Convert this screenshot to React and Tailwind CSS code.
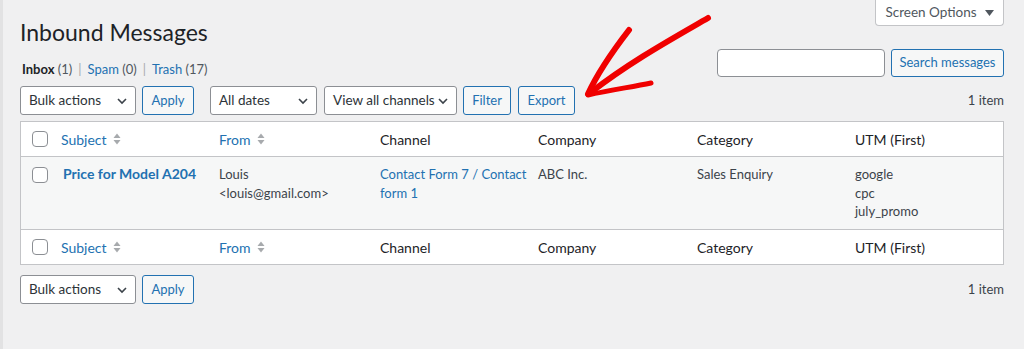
import React from "react";

const font = { fontFamily: 'Lato, "Noto Sans", sans-serif' };

function Chevron() {
	return (
		<svg width="12" height="12" viewBox="0 0 12 12" className="shrink-0 text-[#3c434a]">
			<path d="M2 4 L6 8 L10 4" fill="none" stroke="currentColor" strokeWidth="1.6" />
		</svg>
	);
}

function SelectBox({ label, width }) {
	return (
		<div
			className={`flex items-center justify-between h-[29px] rounded-[3px] border border-[#8c8f94] bg-white pl-[8px] pr-[7px] text-[13.5px] text-[#2c3338] ${width}`}
		>
			<span className="whitespace-nowrap">{label}</span>
			<Chevron />
		</div>
	);
}

function Btn({ children, className = "" }) {
	return (
		<button
			className={`h-[29px] whitespace-nowrap rounded-[3px] border border-[#2271b1] bg-[#f6f7f7] text-[13px] text-[#2271b1] ${className}`}
		>
			{children}
		</button>
	);
}

function Check() {
	return <span className="block h-[16px] w-[16px] rounded-[4px] border border-[#8c8f94] bg-white" />;
}

function SortIcon() {
	return (
		<svg width="10" height="14" viewBox="0 0 10 14" className="ml-[5px]">
			<path d="M1.5 6 L5 1.5 L8.5 6 Z" fill="#a7aaad" />
			<path d="M1.5 8 L5 12.5 L8.5 8 Z" fill="#a7aaad" />
		</svg>
	);
}

const cols = "grid grid-cols-[32px_158px_161px_158px_159px_158px_1fr]";

function HeadRow({ border }) {
	return (
		<div className={`${cols} h-[35px] items-center bg-white text-[14px] ${border}`}>
			<div className="flex justify-end pr-[5px]">
				<Check />
			</div>
			<div className="flex items-center pl-[8px] text-[#2271b1]">
				Subject
				<SortIcon />
			</div>
			<div className="flex items-center pl-[8px] text-[#2271b1]">
				From
				<SortIcon />
			</div>
			<div className="pl-[8px] text-[#1d2327]">Channel</div>
			<div className="pl-[8px] text-[#1d2327]">Company</div>
			<div className="pl-[8px] text-[#1d2327]">Category</div>
			<div className="pl-[8px] text-[#1d2327]">UTM (First)</div>
		</div>
	);
}

export default function App() {
	return (
		<div className="relative h-[349px] w-[1024px] overflow-hidden bg-[#f0f0f1] text-[13px] text-[#3c434a]" style={font}>
			<div className="absolute left-0 top-0 h-full w-[3px] bg-[#e2e2e3]" />

			{/* screen options tab */}
			<div className="flex justify-end pr-[20px]">
				<div className="flex h-[26px] w-[129px] items-center justify-center gap-[8px] rounded-b-[4px] border border-t-0 border-[#c3c4c7] bg-white text-[13.5px] text-[#50575e]">
					Screen Options
					<svg width="9" height="6" viewBox="0 0 9 6">
						<path d="M0 0 L9 0 L4.5 6 Z" fill="#50575e" />
					</svg>
				</div>
			</div>

			<div className="pl-[20px] pr-[20px]">
				<h1 className="-mt-[8px] text-[23px] leading-[29px] text-[#1d2327]">Inbound Messages</h1>

				<div className="mt-[2px] flex h-[28px] items-start justify-between">
					<div className="ml-[2px] mt-[11px] flex gap-[6px] leading-[18px] text-[13px] text-[#50575e]">
						<span>
							<span className="font-bold text-[#1d2327]">Inbox</span> (1)
						</span>
						<span className="text-[#a7aaad]">|</span>
						<span>
							<span className="text-[#2271b1]">Spam</span> (0)
						</span>
						<span className="text-[#a7aaad]">|</span>
						<span>
							<span className="text-[#2271b1]">Trash</span> (17)
						</span>
					</div>
					<div className="flex gap-[6px]">
						<div className="h-[28px] w-[168px] rounded-[4px] border border-[#8c8f94] bg-white" />
						<Btn className="!h-[28px] w-[113px]">Search messages</Btn>
					</div>
				</div>

				{/* top tablenav */}
				<div className="mt-[9px] flex h-[29px] items-center">
					<SelectBox label="Bulk actions" width="w-[116px]" />
					<Btn className="ml-[6px] w-[52px]">Apply</Btn>
					<SelectBox label="All dates" width="ml-[16px] w-[107px]" />
					<SelectBox label="View all channels" width="ml-[7px] w-[133px]" />
					<Btn className="ml-[6px] w-[48px]">Filter</Btn>
					<Btn className="ml-[7px] w-[57px]">Export</Btn>
					<span className="ml-auto text-[13px] text-[#3c434a]">1 item</span>
				</div>

				{/* table */}
				<div className="mt-[6px] border border-[#c3c4c7] bg-white">
					<HeadRow border="border-b border-[#c3c4c7]" />
					<div className={`${cols} h-[72px] bg-[#f6f7f7] pt-[8px] text-[13px] leading-[18.5px]`}>
						<div className="flex justify-end pr-[5px] pt-[2px]">
							<Check />
						</div>
						<div className="pl-[10px] text-[14px] font-bold text-[#2271b1]">Price for Model A204</div>
						<div className="pl-[8px] text-[#3c434a]">
							Louis
							<br />
							&lt;louis@gmail.com&gt;
						</div>
						<div className="pl-[8px] pr-[2px] text-[#2271b1]">Contact Form 7 / Contact form 1</div>
						<div className="pl-[8px]">ABC Inc.</div>
						<div className="pl-[8px]">Sales Enquiry</div>
						<div className="pl-[8px]">
							google
							<br />
							cpc
							<br />
							july_promo
						</div>
					</div>
					<HeadRow border="border-t border-[#c3c4c7]" />
				</div>

				{/* bottom tablenav */}
				<div className="mt-[10px] flex h-[29px] items-center">
					<SelectBox label="Bulk actions" width="w-[116px]" />
					<Btn className="ml-[6px] w-[52px]">Apply</Btn>
					<span className="ml-auto text-[13px] text-[#3c434a]">1 item</span>
				</div>
			</div>

			{/* red hand-drawn arrow */}
			<svg className="absolute left-[575px] top-[5px]" width="150" height="105" viewBox="575 5 150 105">
				<g fill="none" stroke="#f00000" strokeLinecap="round" strokeLinejoin="round">
					<path d="M708 18 C 670 40, 630 62, 590 93" strokeWidth="6" />
					<path d="M629 30 C 612 52, 598 72, 588 94" strokeWidth="6" />
					<path d="M588 95 C 610 90, 632 87, 651 83" strokeWidth="5" />
				</g>
			</svg>
		</div>
	);
}
